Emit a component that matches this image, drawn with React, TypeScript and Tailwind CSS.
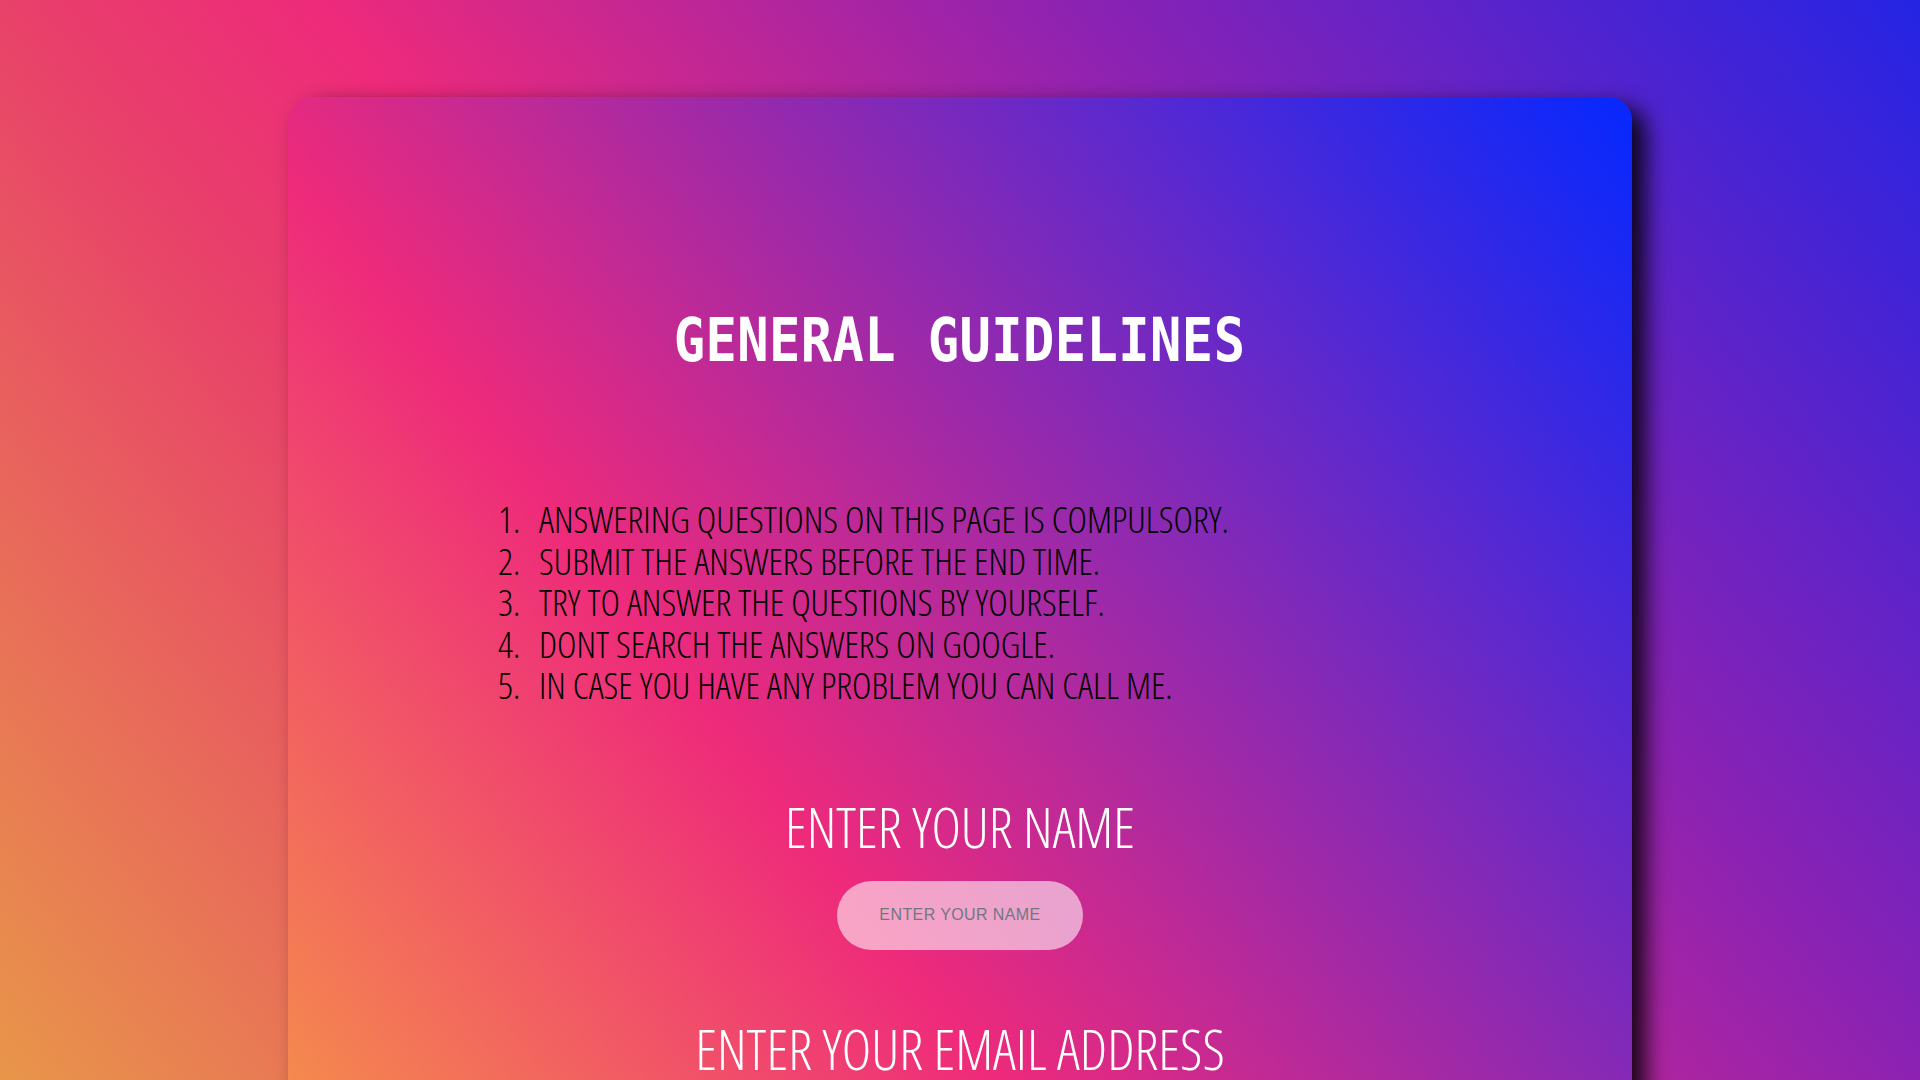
import React from "react";

const rules = [
  "ANSWERING QUESTIONS ON THIS PAGE IS COMPULSORY.",
  "SUBMIT THE ANSWERS BEFORE THE END TIME.",
  "TRY TO ANSWER THE QUESTIONS BY YOURSELF.",
  "DONT SEARCH THE ANSWERS ON GOOGLE.",
  "IN CASE YOU HAVE ANY PROBLEM YOU CAN CALL ME.",
];

export default function App() {
  return (
    <div className="h-screen w-full overflow-hidden bg-[linear-gradient(52deg,#e8964a_0%,#e8406a_31%,#ee2a7b_42%,#8a22b4_70%,#2424e4_100%)]">
      <div className="mx-auto mt-[97px] h-[1700px] w-[1344px] rounded-[24px] bg-[linear-gradient(52deg,#f9b04a_0%,#f5894e_21%,#ee2a7b_47.5%,#0528ff_100%)] pt-[213px] shadow-[14px_10px_22px_rgba(0,0,0,0.85)]">
        <h1 className="text-center font-['DejaVu_Sans_Mono',monospace] text-[60px] font-bold leading-[60px] tracking-[0.5px] text-white">
          <span className="inline-block scale-x-[0.867]">GENERAL GUIDELINES</span>
        </h1>

        <ol className="mt-[128px] pl-[210px] font-['Open_Sans',sans-serif] text-[37px] font-light leading-[41.5px] text-black font-stretch-condensed">
          {rules.map((r, i) => (
            <li key={i} className="flex">
              <span className="w-[41px] shrink-0">{i + 1}.</span>
              <span>{r}</span>
            </li>
          ))}
        </ol>

        <div className="mt-[88px] flex flex-col items-center">
          <label className="font-['Open_Sans',sans-serif] text-[56px] font-light leading-[64px] text-white font-stretch-condensed">
            ENTER YOUR NAME
          </label>
          <input
            type="text"
            placeholder="ENTER YOUR NAME"
            className="mt-[23px] h-[69px] w-[246px] rounded-full bg-white/[0.57] text-center font-['Liberation_Sans',Arial,sans-serif] text-[16px] tracking-[0.4px] text-gray-700 outline-none placeholder:text-[#6f7780]"
          />
          <label className="mt-[66px] font-['Open_Sans',sans-serif] text-[56px] font-light leading-[64px] text-white font-stretch-condensed">
            ENTER YOUR EMAIL ADDRESS
          </label>
          <input
            type="email"
            placeholder="ENTER YOUR EMAIL"
            className="mt-[23px] h-[69px] w-[246px] rounded-full bg-white/[0.57] text-center font-['Liberation_Sans',Arial,sans-serif] text-[16px] tracking-[0.4px] text-gray-700 outline-none placeholder:text-[#6f7780]"
          />
        </div>
      </div>
    </div>
  );
}
